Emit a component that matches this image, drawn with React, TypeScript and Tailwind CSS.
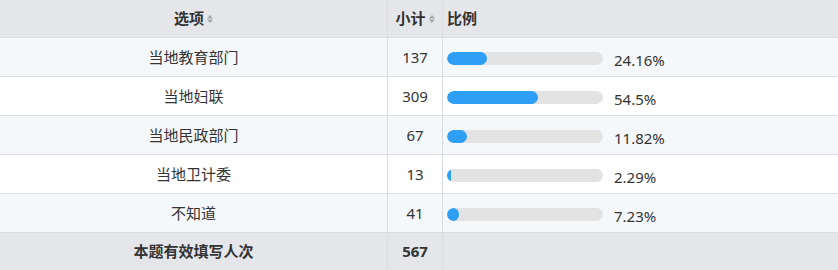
const rows = [
  { name: "当地教育部门", count: 137, pct: "24.16%", w: 24.16 },
  { name: "当地妇联", count: 309, pct: "54.5%", w: 54.5 },
  { name: "当地民政部门", count: 67, pct: "11.82%", w: 11.82 },
  { name: "当地卫计委", count: 13, pct: "2.29%", w: 2.29 },
  { name: "不知道", count: 41, pct: "7.23%", w: 7.23 },
];

function SortIcon() {
  return (
    <svg width="6" height="10" viewBox="0 0 6 10" className="ml-[3px] inline-block">
      <path d="M3 1 L6 4.5 L0 4.5 Z" fill="#a3a6ab" />
      <path d="M3 9 L6 5.5 L0 5.5 Z" fill="#a3a6ab" />
    </svg>
  );
}

export default function App() {
  return (
    <div
      className="w-[838px] h-[270px] bg-white text-[15px] text-[#333]"
      style={{ fontFamily: '"Noto Sans", "Noto Sans CJK SC", sans-serif' }}
    >
      {/* header */}
      <div className="flex h-[38px] bg-[#e4e6ea] border-b border-[#d9dde2]">
        <div className="w-[388px] border-r border-[#d9dde2] flex items-center justify-center font-bold">
          选项<SortIcon />
        </div>
        <div className="w-[55px] border-r border-[#d9dde2] flex items-center justify-center font-bold">
          小计<SortIcon />
        </div>
        <div className="flex-1 flex items-center pl-[4px] font-bold">比例</div>
      </div>

      {rows.map((r, i) => (
        <div
          key={r.name}
          className={`flex h-[39px] border-b border-[#d9dde2] ${i % 2 === 0 ? "bg-[#f5f8fb]" : "bg-white"}`}
        >
          <div className="w-[388px] border-r border-[#d9dde2] flex items-center justify-center">
            {r.name}
          </div>
          <div className="w-[55px] border-r border-[#d9dde2] flex items-center justify-center">
            {r.count}
          </div>
          <div className="flex-1 flex items-center pl-[4px]">
            <div className="w-[156px] h-[13px] rounded-full bg-[#e3e3e3] overflow-hidden mt-[2px]">
              <div
                className="h-full rounded-full bg-[#2f9ff5]"
                style={{ width: `${Math.max(Math.round(r.w * 1.67), 4)}px` }}
              />
            </div>
            <span className="ml-[11px] mt-[7px] text-[#333]">{r.pct}</span>
          </div>
        </div>
      ))}

      {/* footer */}
      <div className="flex h-[37px] bg-[#e4e6ea]">
        <div className="w-[388px] border-r border-[#d9dde2] flex items-center justify-center font-bold">
          本题有效填写人次
        </div>
        <div className="w-[55px] border-r border-[#d9dde2] flex items-center justify-center font-bold">
          567
        </div>
        <div className="flex-1" />
      </div>
    </div>
  );
}
